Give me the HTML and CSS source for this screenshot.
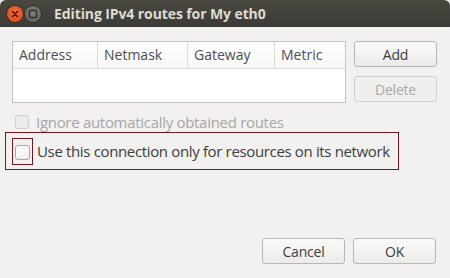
FILE: index.html
```html
<!DOCTYPE html>
<html>
<head>
<meta charset="utf-8">
<link rel="stylesheet" href="styles.css">
</head>
<body>
<div class="window">
  <div class="titlebar">
    <span class="wbtn close"><svg width="16" height="16" viewBox="0 0 16 16"><path d="M5.5 5.5 L10.5 10.5 M10.5 5.5 L5.5 10.5" stroke="#3a1a10" stroke-width="1.6" stroke-linecap="round"/></svg></span>
    <span class="wbtn mini"><svg width="16" height="16" viewBox="0 0 16 16"><rect x="4.5" y="4.5" width="7" height="7" rx="1" fill="none" stroke="#2e2d2a" stroke-width="1.5"/></svg></span>
    <span class="title">Editing IPv4 routes for My eth0</span>
  </div>
  <div class="content">
    <div class="toprow">
      <div class="table">
        <div class="thead">
          <div class="th c1">Address</div>
          <div class="th c2">Netmask</div>
          <div class="th c3">Gateway</div>
          <div class="th c4">Metric</div>
        </div>
        <div class="tbody"></div>
      </div>
      <div class="sidebtns">
        <button class="btn">Add</button>
        <button class="btn disabled">Delete</button>
      </div>
    </div>
    <div class="check ignore">
      <span class="box dis"></span>
      <span class="label">Ignore automatically obtained routes</span>
    </div>
    <div class="focusrow">
      <span class="boxfocus"><span class="box"></span></span>
      <span class="label big">Use this connection only for resources on its network</span>
    </div>
    <div class="spacer"></div>
    <div class="actions">
      <button class="btn">Cancel</button>
      <button class="btn">OK</button>
    </div>
  </div>
</div>
</body>
</html>
```
FILE: styles.css
```css
html, body {
  margin: 0;
  padding: 0;
  background: #e9e8e6;
}
body {
  width: 450px;
  height: 278px;
  overflow: hidden;
  font-family: "Open Sans", "DejaVu Sans", sans-serif;
}
.window {
  width: 450px;
  height: 278px;
  display: flex;
  flex-direction: column;
  background: #f2f1f0;
  border-radius: 6px 6px 0 0;
  overflow: hidden;
}
.titlebar {
  height: 27px;
  flex: none;
  display: flex;
  align-items: center;
  background: linear-gradient(#48473f, #3c3b37);
  padding-left: 7px;
  box-sizing: border-box;
}
.wbtn {
  width: 16px;
  height: 16px;
  border-radius: 50%;
  display: flex;
  margin-right: 2px;
}
.wbtn svg { display: block; }
.close {
  background: radial-gradient(circle at 50% 40%, #f36a3c, #e04512);
  box-shadow: 0 0 0 1px #2f2e2a;
}
.mini {
  background: radial-gradient(circle at 50% 40%, #7f7e79, #5d5c58);
  box-shadow: 0 0 0 1px #2f2e2a;
}
.title {
  margin-left: 11px;
  color: #dfdbd2;
  font-weight: bold;
  font-size: 14px;
  letter-spacing: -0.1px;
}
.content {
  flex: 1;
  display: flex;
  flex-direction: column;
  padding: 14px 13px 14px 12px;
}
.toprow {
  display: flex;
  gap: 8px;
}
.table {
  width: 334px;
  height: 62px;
  border: 1px solid #c6c4c1;
  background: #fff;
  box-sizing: border-box;
  display: flex;
  flex-direction: column;
}
.thead {
  height: 27px;
  display: flex;
  border-bottom: 1px solid #dcdad6;
  box-sizing: border-box;
  background: linear-gradient(#fff, #f7f7f6);
}
.th {
  font-size: 14px;
  color: #4c4f56;
  padding-left: 6px;
  line-height: 26px;
  box-sizing: border-box;
  border-right: 1px solid #dcdad6;
  letter-spacing: 0;
}
.c1 { width: 85px; }
.c2 { width: 90px; }
.c3 { width: 87px; }
.c4 { flex: 1; border-right: none; }
.sidebtns {
  display: flex;
  flex-direction: column;
  gap: 9px;
}
.btn {
  width: 83px;
  height: 26px;
  border: 1px solid #b8b6b3;
  border-radius: 3px;
  background: linear-gradient(#fafaf9, #ecebea);
  font-family: "Open Sans", "DejaVu Sans", sans-serif;
  font-size: 14px;
  color: #3c3c3c;
  padding: 0;
  letter-spacing: -0.2px;
}
.btn.disabled {
  color: #a8a8a6;
  border-color: #d0cecb;
  background: #f0efee;
}
.check {
  display: flex;
  align-items: center;
  margin-top: 11px;
  padding-left: 3px;
  height: 16px;
}
.box {
  width: 14px;
  height: 14px;
  border: 1px solid #a9a7a3;
  border-radius: 3px;
  background: linear-gradient(#fff, #efeeec);
  display: block;
  box-sizing: border-box;
  flex: none;
}
.box.dis {
  border-color: #cfcdca;
  background: #edecea;
}
.label {
  margin-left: 7px;
  font-size: 15px;
  color: #a7a7a5;
  letter-spacing: -0.3px;
}
.focusrow {
  margin-top: 2px;
  margin-left: -7px;
  width: 394px;
  height: 38px;
  border: 1px solid #741822;
  box-sizing: border-box;
  display: flex;
  align-items: center;
  padding-left: 6px;
}
.boxfocus {
  width: 21px;
  height: 27px;
  border: 1px solid #741822;
  box-sizing: border-box;
  display: flex;
  align-items: flex-end;
  justify-content: center;
  padding-bottom: 4px;
}
.boxfocus .box {
  width: 15px;
  height: 15px;
}
.label.big {
  margin-left: 4px;
  font-size: 15px;
  color: #3c3c3c;
  letter-spacing: -0.35px;
}
.spacer { flex: 1; }
.actions {
  display: flex;
  justify-content: flex-end;
  gap: 8px;
  margin-right: 1px;
}
```
